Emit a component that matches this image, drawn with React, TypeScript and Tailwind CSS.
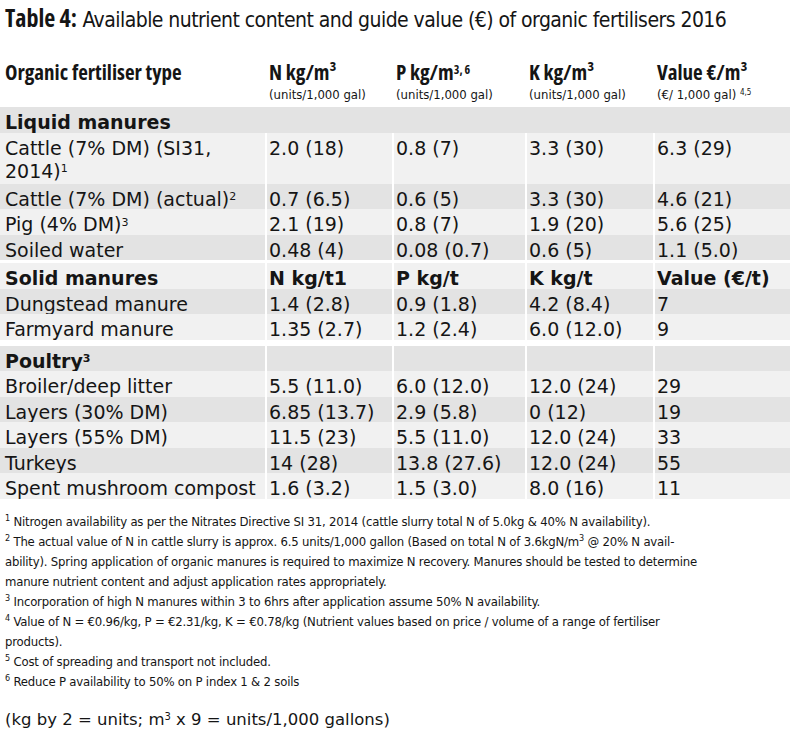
import type { ReactNode } from "react";

const COLS = "grid grid-cols-[265px_125px_131px_126px_1fr] gap-x-[2px]";
const DARK = "bg-[#e3e3e3]";
const LIGHT = "bg-[#f1f1f1]";

type Row = {
  cells: ReactNode[];
  dark?: boolean;
  bold?: boolean;
  tall?: boolean;
};

function Sup({ children, size = "text-[11px]" }: { children: ReactNode; size?: string }) {
  return <sup className={`${size} leading-none`}>{children}</sup>;
}

const LIQUID: Row[] = [
  {
    cells: [
      <>
        Cattle (7% DM) (SI31,
        <br />
        2014)<Sup>1</Sup>
      </>,
      "2.0 (18)",
      "0.8 (7)",
      "3.3 (30)",
      "6.3 (29)",
    ],
    tall: true,
  },
  {
    cells: [<>Cattle (7% DM) (actual)<Sup>2</Sup></>, "0.7 (6.5)", "0.6 (5)", "3.3 (30)", "4.6 (21)"],
    dark: true,
  },
  { cells: [<>Pig (4% DM)<Sup>3</Sup></>, "2.1 (19)", "0.8 (7)", "1.9 (20)", "5.6 (25)"] },
  { cells: ["Soiled water", "0.48 (4)", "0.08 (0.7)", "0.6 (5)", "1.1 (5.0)"], dark: true },
];

const SOLID: Row[] = [
  { cells: ["Solid manures", "N kg/t1", "P kg/t", "K kg/t", "Value (€/t)"], bold: true },
  { cells: ["Dungstead manure", "1.4 (2.8)", "0.9 (1.8)", "4.2 (8.4)", "7"], dark: true },
  { cells: ["Farmyard manure", "1.35 (2.7)", "1.2 (2.4)", "6.0 (12.0)", "9"] },
];

const POULTRY: Row[] = [
  { cells: [<>Poultry<Sup>3</Sup></>, "", "", "", ""], dark: true, bold: true },
  { cells: ["Broiler/deep litter", "5.5 (11.0)", "6.0 (12.0)", "12.0 (24)", "29"] },
  { cells: ["Layers (30% DM)", "6.85 (13.7)", "2.9 (5.8)", "0 (12)", "19"], dark: true },
  { cells: ["Layers (55% DM)", "11.5 (23)", "5.5 (11.0)", "12.0 (24)", "33"] },
  { cells: ["Turkeys", "14 (28)", "13.8 (27.6)", "12.0 (24)", "55"], dark: true },
  { cells: ["Spent mushroom compost", "1.6 (3.2)", "1.5 (3.0)", "8.0 (16)", "11"] },
];

function TableRow({ row }: { row: Row }) {
  return (
    <div className={COLS}>
      {row.cells.map((cell, i) => (
        <div
          key={i}
          className={`${row.dark ? DARK : LIGHT} ${row.tall ? "h-[51px]" : "h-[25.5px]"} ${
            i === 0 ? "pl-[5px]" : "pl-[2px]"
          } ${row.bold ? "font-bold" : ""} whitespace-nowrap pt-[4px] leading-[23px]`}
        >
          {cell}
        </div>
      ))}
    </div>
  );
}

const HEADS: { title: ReactNode; sub: ReactNode }[] = [
  { title: "N kg/m³", sub: "(units/1,000 gal)" },
  {
    title: (
      <>
        P kg/m<Sup size="text-[12px]">3, 6</Sup>
      </>
    ),
    sub: "(units/1,000 gal)",
  },
  { title: "K kg/m³", sub: "(units/1,000 gal)" },
  {
    title: "Value €/m³",
    sub: (
      <>
        (€/ 1,000 gal) <Sup size="text-[8px]">4,5</Sup>
      </>
    ),
  },
];

const NOTES: ReactNode[] = [
  <>
    <Sup size="text-[9px]">1</Sup> Nitrogen availability as per the Nitrates Directive SI 31, 2014 (cattle slurry total N
    of 5.0kg &amp; 40% N availability).
  </>,
  <>
    <Sup size="text-[9px]">2</Sup> The actual value of N in cattle slurry is approx. 6.5 units/1,000 gallon (Based on total
    N of 3.6kgN/m<Sup size="text-[9px]">3</Sup> @ 20% N avail-
  </>,
  <>
    ability). Spring application of organic manures is required to maximize N recovery. Manures should be tested to
    determine
  </>,
  <>manure nutrient content and adjust application rates appropriately.</>,
  <>
    <Sup size="text-[9px]">3</Sup> Incorporation of high N manures within 3 to 6hrs after application assume 50% N
    availability.
  </>,
  <>
    <Sup size="text-[9px]">4</Sup> Value of N = €0.96/kg, P = €2.31/kg, K = €0.78/kg (Nutrient values based on price /
    volume of a range of fertiliser
  </>,
  <>products).</>,
  <>
    <Sup size="text-[9px]">5</Sup> Cost of spreading and transport not included.
  </>,
  <>
    <Sup size="text-[9px]">6</Sup> Reduce P availability to 50% on P index 1 &amp; 2 soils
  </>,
];

export default function App() {
  return (
    <div className="w-[790px] h-[736px] overflow-hidden bg-white text-[#151515]">
      <h1 className="mt-[6px] h-[28px] pl-[5px] font-['DejaVu_Sans_Condensed',sans-serif] text-[21px] leading-[28px] tracking-[-0.55px] whitespace-nowrap">
        <span className="font-['Open_Sans',sans-serif] font-stretch-condensed font-bold text-[24px] leading-none tracking-normal">
          Table 4:
        </span>{" "}
        Available nutrient content and guide value (€) of organic fertilisers 2016
      </h1>

      <div className={`${COLS} pt-[27px] pb-[3px]`}>
        <div className="pl-[5px] font-['Open_Sans',sans-serif] font-stretch-condensed font-bold text-[21px] leading-[22px] whitespace-nowrap">
          Organic fertiliser type
        </div>
        {HEADS.map((h, i) => (
          <div key={i} className="pl-[2px]">
            <div className="font-['Open_Sans',sans-serif] font-stretch-condensed font-bold text-[21px] leading-[22px] whitespace-nowrap">
              {h.title}
            </div>
            <div className="mt-[2px] font-['DejaVu_Sans_Condensed',sans-serif] text-[13px] leading-[19px] whitespace-nowrap">
              {h.sub}
            </div>
          </div>
        ))}
      </div>

      <div className="font-['DejaVu_Sans',sans-serif] text-[19px]">
        <div className={`${DARK} h-[25.5px] pl-[5px] pt-[4px] leading-[23px] font-bold`}>Liquid manures</div>
        {LIQUID.map((r, i) => (
          <TableRow key={i} row={r} />
        ))}
        <div className="h-[3px]" />
        {SOLID.map((r, i) => (
          <TableRow key={i} row={r} />
        ))}
        <div className="h-[6px]" />
        {POULTRY.map((r, i) => (
          <TableRow key={i} row={r} />
        ))}
      </div>

      <div className="mt-[13px] pl-[5px] font-['DejaVu_Sans_Condensed',sans-serif] text-[13px] leading-[20px] tracking-[-0.2px]">
        {NOTES.map((n, i) => (
          <div key={i} className="whitespace-nowrap">
            {n}
          </div>
        ))}
      </div>

      <div className="mt-[18px] pl-[5px] font-['DejaVu_Sans',sans-serif] text-[16.5px] leading-[20px] whitespace-nowrap">
        (kg by 2 = units; m<Sup size="text-[10px]">3</Sup> x 9 = units/1,000 gallons)
      </div>
    </div>
  );
}
